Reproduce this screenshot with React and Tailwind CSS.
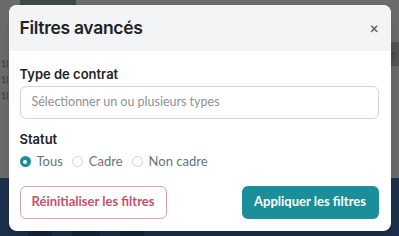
import { useState } from 'react';

const heading = { fontFamily: 'Inter, "Noto Sans", sans-serif' };

function Radio({ label, checked, onChange }) {
    return (
        <label className="flex items-center gap-[6px] cursor-pointer" onClick={onChange}>
            <span
                className={`w-[11px] h-[11px] rounded-full flex items-center justify-center ${checked ? 'bg-[#1a8f9a]' : 'border border-[#d4d4d4] bg-white'}`}
            >
                {checked && <span className="w-[4px] h-[4px] rounded-full bg-white" />}
            </span>
            <span className="text-[13px] text-[#6b7280]">{label}</span>
        </label>
    );
}

function Background() {
    return (
        <div className="absolute inset-0 flex flex-col">
            <div className="h-[6px] flex">
                <div className="w-[20px]" />
                <div className="w-[56px] bg-[#3f4a47]" />
            </div>
            <div className="flex-1 flex flex-col pt-[52px] pl-[1px] gap-[4px] text-[9px] leading-[12px] text-[#3a3a3a]">
                <span>1(</span>
                <span>1(</span>
                <span>1(</span>
            </div>
            <div className="h-[58px] bg-[#1c2f4b] flex items-end gap-[20px] pl-[28px]">
                <div className="w-[24px] h-[6px] bg-[#16253c]" />
                <div className="w-[28px] h-[6px] bg-[#16253c]" />
                <div className="w-[24px] h-[6px] bg-[#16253c]" />
            </div>
        </div>
    );
}

export default function App() {
    const [statut, setStatut] = useState('tous');

    return (
        <div className="relative w-[399px] h-[236px] overflow-hidden bg-[#6b6b6b]" style={{ fontFamily: 'Lato, "Noto Sans", sans-serif' }}>
            <Background />
            <div className="absolute right-0 top-[42px] w-[10px] h-[24px] bg-[#525252] text-[11px] text-[#3a3a3a] leading-[24px]">e</div>
            <div className="absolute inset-0 flex items-center justify-center">
                <div className="w-[382px] h-[226px] bg-white rounded-[8px] overflow-hidden flex flex-col shadow-lg">
                    <div className="h-[46px] bg-[#f3f4f6] flex items-center justify-between pl-[11px] pr-[12px]">
                        <h2 className="text-[17.5px] font-semibold text-[#1f2328] tracking-[-0.3px]" style={heading}>Filtres avancés</h2>
                        <button className="text-[#5f6368] text-[15px] font-bold leading-none">×</button>
                    </div>
                    <div className="flex-1 flex flex-col pl-[11px] pr-[12px] pt-[15px]">
                        <label className="text-[13px] font-semibold text-[#1f2328] leading-[16px]" style={heading}>Type de contrat</label>
                        <div className="mt-[4px] h-[33px] border border-[#d1d5db] rounded-[6px] flex items-center px-[11px] text-[12.5px] text-[#8a8f98]">
                            Sélectionner un ou plusieurs types
                        </div>
                        <label className="mt-[12px] text-[13px] font-semibold text-[#1f2328] leading-[16px]" style={heading}>Statut</label>
                        <div className="mt-[5px] flex items-center gap-[9px]">
                            <Radio label="Tous" checked={statut === 'tous'} onChange={() => setStatut('tous')} />
                            <Radio label="Cadre" checked={statut === 'cadre'} onChange={() => setStatut('cadre')} />
                            <Radio label="Non cadre" checked={statut === 'non'} onChange={() => setStatut('non')} />
                        </div>
                        <div className="mt-[14px] flex justify-between">
                            <button className="w-[147px] h-[33px] rounded-[6px] border border-[#dba0ac] text-[#c4526c] text-[13px] font-bold">
                                Réinitialiser les filtres
                            </button>
                            <button className="w-[137px] h-[33px] rounded-[6px] bg-[#1a8f9a] text-white text-[13px] font-bold">
                                Appliquer les filtres
                            </button>
                        </div>
                    </div>
                </div>
            </div>
        </div>
    );
}
